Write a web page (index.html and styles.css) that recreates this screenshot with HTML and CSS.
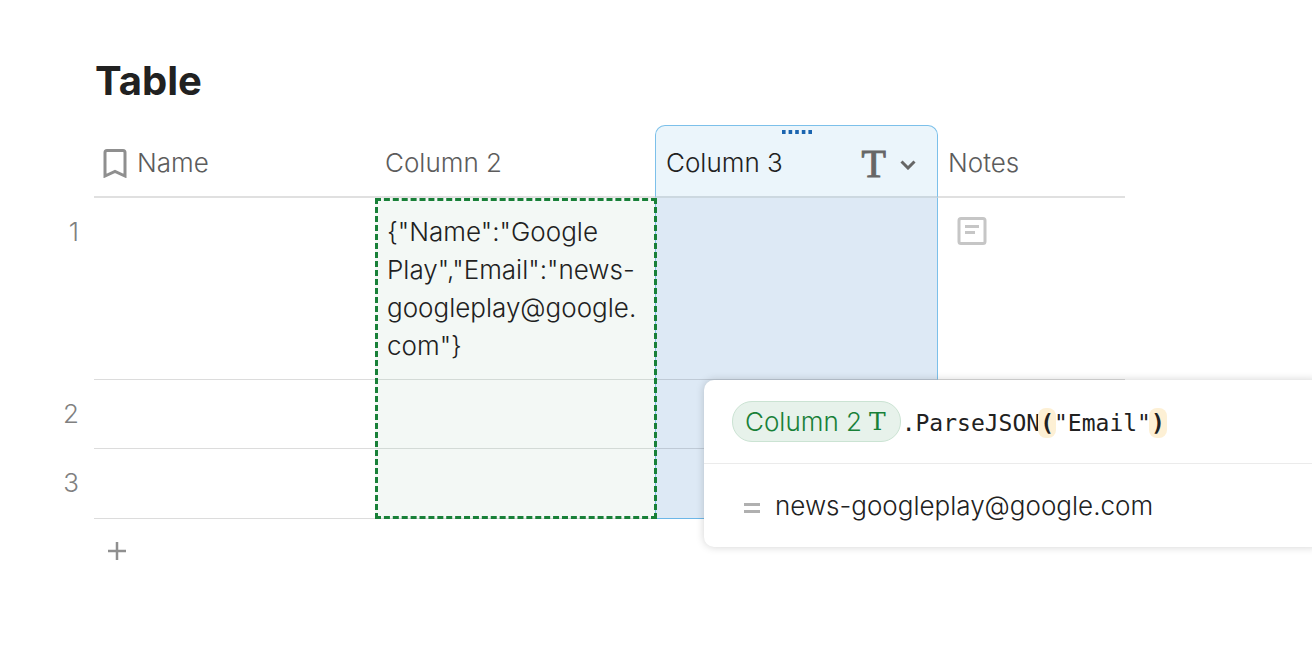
FILE: index.html
```html
<!DOCTYPE html>
<html lang="en">
    <head>
        <meta charset="UTF-8">
        <meta name="viewport" content="width=device-width, initial-scale=1.0">
        <title>Table</title>
        <link rel="stylesheet" href="styles.css">
    </head>
    <body>
        <main id="page">
            <h1>Table</h1>
            <div id="grid">
                <table>
                    <colgroup>
                        <col class="col-number">
                        <col class="col-name">
                        <col class="col-source">
                        <col class="col-active">
                        <col>
                    </colgroup>
                    <thead>
                        <tr>
                            <td class="row-number"></td>
                            <th scope="col">
                                <div class="head">
                                    <svg class="bookmark" width="24" height="30" viewBox="0 0 24 30" aria-hidden="true">
                                        <path d="M2 28V4.500Q2 2.500 4 2.500H20Q22 2.500 22 4.500V28L12 23.500Z" fill="none" stroke="#8f8f8f" stroke-width="3"/>
                                    </svg>
                                    Name
                                </div>
                            </th>
                            <th scope="col"><div class="head">Column 2</div></th>
                            <th scope="col" class="active">
                                <div class="head">
                                    Column 3
                                    <span class="type">T</span>
                                    <button class="menu" type="button" aria-label="Column options">
                                        <svg width="16" height="10" viewBox="0 0 16 10">
                                            <path d="M1.500 1.500L8 8L14.500 1.500" fill="none" stroke="#666" stroke-width="3"/>
                                        </svg>
                                    </button>
                                </div>
                                <svg class="handle" width="30" height="4" viewBox="0 0 30 4" aria-hidden="true">
                                    <path d="M0 2H30" stroke="#1b65b0" stroke-width="4" stroke-dasharray="3.600 3"/>
                                </svg>
                            </th>
                            <th scope="col"><div class="head">Notes</div></th>
                        </tr>
                    </thead>
                    <tbody>
                        <tr class="tall">
                            <td class="row-number">1</td>
                            <td></td>
                            <td class="source">{"Name":"Google Play","Email":"news-googleplay@google.com"}</td>
                            <td class="active"></td>
                            <td class="note">
                                <button type="button" aria-label="Open note">
                                    <svg width="30" height="28" viewBox="0 0 30 28">
                                        <rect x="2" y="1.500" width="26" height="25" rx="2" fill="none" stroke="#c6c6c6" stroke-width="3"/>
                                        <path d="M8 9.500H22M8 15.500H18" stroke="#c6c6c6" stroke-width="3"/>
                                    </svg>
                                </button>
                            </td>
                        </tr>
                        <tr>
                            <td class="row-number">2</td>
                            <td></td>
                            <td class="source"></td>
                            <td class="active"></td>
                            <td></td>
                        </tr>
                        <tr>
                            <td class="row-number">3</td>
                            <td></td>
                            <td class="source"></td>
                            <td class="active last"></td>
                            <td></td>
                        </tr>
                    </tbody>
                </table>
                <!-- dashed frame round the column used by the formula -->
                <div id="source-frame"></div>

                <div id="formula">
                    <div class="editor" role="textbox" aria-label="Formula">
                        <span class="chip">Column 2 <span class="chip-type">T</span></span>
                        <code>.ParseJSON<b>(</b>"Email"<b>)</b></code>
                    </div>
                    <div class="result">
                        <svg width="16" height="16" viewBox="0 0 16 16" aria-hidden="true">
                            <path d="M0 6.500H16M0 13.500H16" stroke="#b0b0b0" stroke-width="3"/>
                        </svg>
                        <output>news-googleplay@google.com</output>
                    </div>
                </div>
            </div>
            <button id="add-row" type="button" aria-label="Add row">
                <svg width="18" height="18" viewBox="0 0 18 18">
                    <path d="M9 0V18M0 9H18" stroke="#8f8f8f" stroke-width="2.500"/>
                </svg>
            </button>
        </main>
    </body>
</html>
```
FILE: styles.css
```css
*{
    box-sizing: border-box;
}
body{
    margin: 0;
    background-color: white;
    color: #212121;
    font-family: Inter, "Liberation Sans", sans-serif;
    font-size: 26px;
    font-weight: 300;
    line-height: 38px;
}
button{
    display: block;
    padding: 0;
    border: none;
    background: none;
    cursor: pointer;
}
svg{
    display: block;
}
#page{
    padding: 56px 187px 40px 40px;
    overflow-x: hidden;
}
h1{
    margin: 0 0 20px 55px;
    font-size: 40px;
    font-weight: 700;
    line-height: 49px;
}
#grid{
    position: relative;
}
table{
    width: 100%;
    table-layout: fixed;
    border-collapse: separate;
    border-spacing: 0;
}
.col-number{
    width: 54px;
}
.col-name{
    width: 281px;
}
.col-source{
    width: 280px;
}
.col-active{
    width: 283px;
}
th{
    position: relative;
    height: 73px;
    padding: 5px 10px 0;
    border-bottom: 2px solid #e0e0e0;
    color: #5c5c5c;
    font-weight: 300;
    text-align: left;
}
td{
    height: 69px;
    padding: 15px 12px 14px;
    border-bottom: 1px solid #dcdcdc;
    vertical-align: top;
    overflow-wrap: anywhere;
}
.tall td{
    height: 182px;
}
td.row-number{
    padding-right: 15px;
    border-bottom: none;
    color: #808080;
    text-align: right;
}
.head{
    display: flex;
    align-items: center;
    gap: 10px;
}
.bookmark{
    margin-left: -1px;
}
td.source{
    background-color: #f3f8f5;
    border-color: #d3dad6;
}
th.active{
    padding-top: 3px;
    border-top: 1px solid #7cc0ea;
    border-bottom-color: #ccd8e0;
    border-radius: 10px 10px 0 0;
    background-color: #ebf5fb;
    color: #212121;
}
td.active{
    background-color: #dde9f5;
    border-bottom-color: #bfcad6;
}
.active{
    border-left: 1px solid #7cc0ea;
    border-right: 1px solid #7cc0ea;
}
td.last{
    height: 70px;
    border-bottom-color: #6cb7e8;
}
.type{
    margin-left: auto;
    padding-top: 3px;
    color: #666;
    font-family: "Liberation Serif", serif;
    font-size: 40px;
    -webkit-text-stroke: 1px #666;
}
.menu{
    padding: 4px 11px 0 4px;
}
.handle{
    position: absolute;
    top: 4px;
    left: 50%;
    margin-left: -15px;
}
.note button{
    margin: 4px 7px;
}
#source-frame{
    position: absolute;
    top: 73px;
    bottom: 0;
    left: 335px;
    width: 282px;
    border: 3px dashed #188038;
}
#formula{
    position: absolute;
    top: 255px;
    left: 664px;
    right: -197px;
    border-radius: 10px;
    background-color: white;
    box-shadow: 0 0 8px rgba(0, 0, 0, 0.18);
}
.editor{
    display: flex;
    align-items: center;
    gap: 1px;
    height: 84px;
    padding: 0 28px;
    border-bottom: 1px solid #ebebeb;
}
.chip{
    display: flex;
    align-items: center;
    gap: 7px;
    height: 41px;
    padding: 0 14px 0 12px;
    border: 1px solid #cbe3d3;
    border-radius: 20px;
    background-color: #e7f2eb;
    color: #188038;
}
.chip-type{
    font-family: "DejaVu Serif", serif;
    font-size: 25px;
}
code{
    padding-top: 2px;
    font-family: "DejaVu Sans Mono", monospace;
    font-size: 23px;
}
code b{
    margin: 0 -2px;
    padding: 2px;
    border-radius: 8px;
    background-color: #fdf0d5;
    font-weight: 700;
}
.result{
    display: flex;
    align-items: center;
    gap: 15px;
    height: 83px;
    padding: 0 40px;
}
#add-row{
    margin: 23px 68px;
}
```
